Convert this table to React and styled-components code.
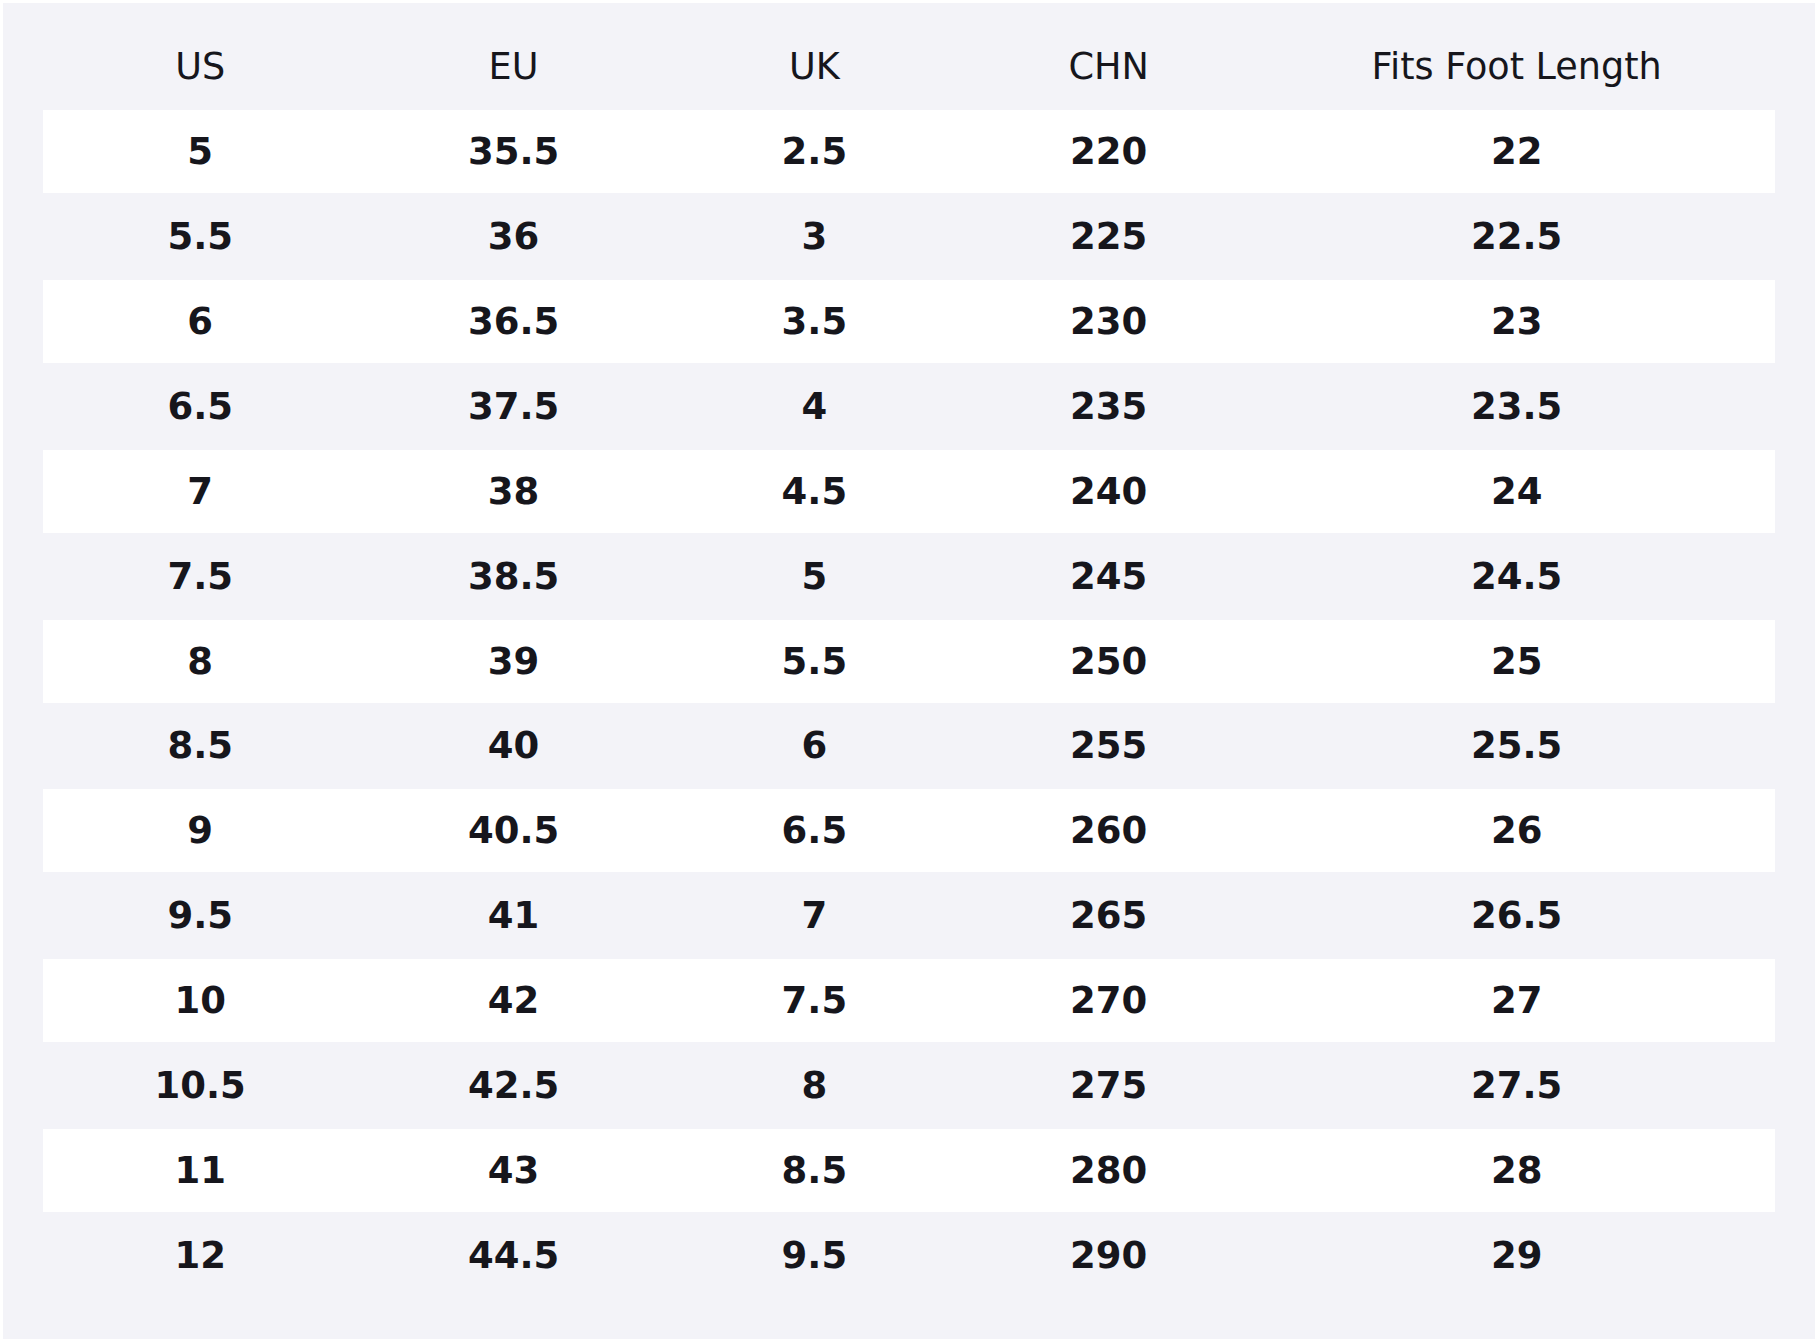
import React from "react";
import styled, { createGlobalStyle } from "styled-components";

const GlobalStyle = createGlobalStyle`
  html, body {
    margin: 0;
    padding: 0;
    background: #ffffff;
  }
  body {
    font-family: "DejaVu Sans", "Liberation Sans", sans-serif;
    color: #16161c;
  }
`;

const HEADERS = ["US", "EU", "UK", "CHN", "Fits Foot Length"];

const SIZES = [
  ["5", "35.5", "2.5", "220", "22"],
  ["5.5", "36", "3", "225", "22.5"],
  ["6", "36.5", "3.5", "230", "23"],
  ["6.5", "37.5", "4", "235", "23.5"],
  ["7", "38", "4.5", "240", "24"],
  ["7.5", "38.5", "5", "245", "24.5"],
  ["8", "39", "5.5", "250", "25"],
  ["8.5", "40", "6", "255", "25.5"],
  ["9", "40.5", "6.5", "260", "26"],
  ["9.5", "41", "7", "265", "26.5"],
  ["10", "42", "7.5", "270", "27"],
  ["10.5", "42.5", "8", "275", "27.5"],
  ["11", "43", "8.5", "280", "28"],
  ["12", "44.5", "9.5", "290", "29"],
];

const App = () => {
  return (
    <Page>
      <GlobalStyle />
      <Panel>
        <Row>
          {HEADERS.map((h) => (
            <HeadCell key={h}>{h}</HeadCell>
          ))}
        </Row>
        {SIZES.map((row, index) => (
          <Row key={row[0]} $striped={index % 2 === 0}>
            {row.map((val, i) => (
              <Cell key={i}>{val}</Cell>
            ))}
          </Row>
        ))}
      </Panel>
    </Page>
  );
};

const Page = styled.div`
  padding: 3px;
`;

const Panel = styled.div`
  background: #f3f3f8;
  padding: 22px 40px 40px;
  display: flex;
  flex-direction: column;
`;

const Row = styled.div`
  display: grid;
  grid-template-columns: 314fr 312fr 289fr 299fr 516fr;
  align-items: center;
  height: 82.95px;
  border-bottom: 2px solid #f3f3f8;
  background: ${(p) => (p.$striped ? "#ffffff" : "transparent")};
`;

const Cell = styled.div`
  text-align: center;
  font-size: 37px;
  font-weight: bold;
  white-space: nowrap;
`;

const HeadCell = styled(Cell)`
  font-size: 36.6px;
  font-weight: normal;
`;

export default App;
